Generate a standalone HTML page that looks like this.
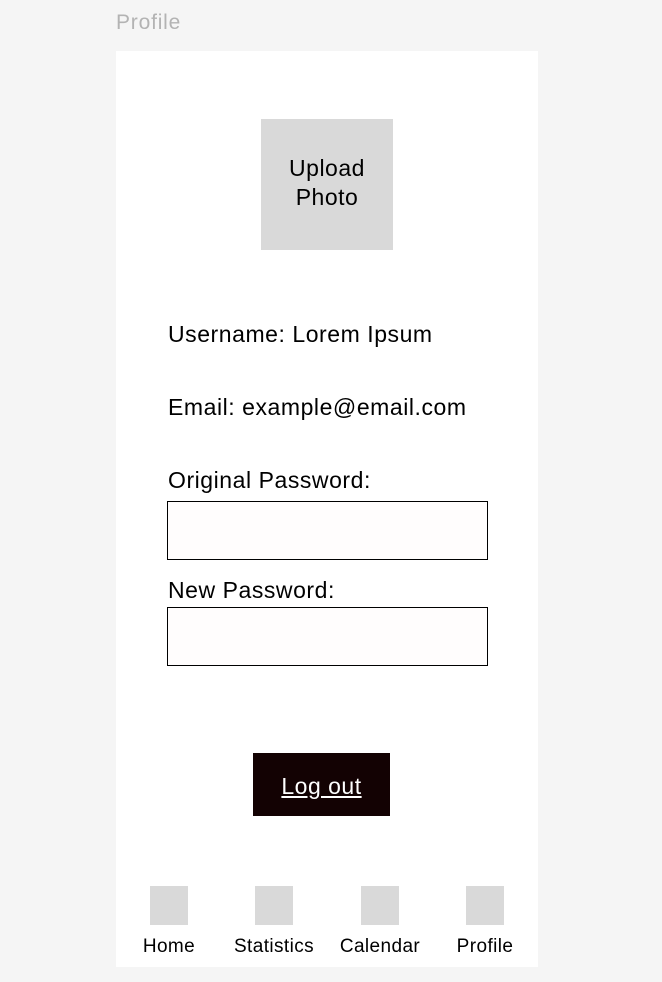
<!DOCTYPE html>
<html><head><meta charset="utf-8"><style>
*{margin:0;padding:0;box-sizing:border-box}
body{width:662px;height:982px;background:#f5f5f5;position:relative;font-family:"Liberation Sans",sans-serif;color:#000;overflow:hidden}
.a{position:absolute;white-space:nowrap}
.t{font-size:23px;letter-spacing:0.55px}
.l{font-size:19px;text-align:center;top:936px;width:110px;letter-spacing:0.4px}
</style></head><body>
<div class="a" style="left:116px;top:11px;font-size:21px;color:#b3b3b3;letter-spacing:0.8px">Profile</div>
<div class="a" style="left:116px;top:51px;width:422px;height:916px;background:#fff"></div>
<div class="a" style="left:261px;top:119px;width:132px;height:131px;background:#d9d9d9;font-size:23px;text-align:center;line-height:29px;padding-top:35px;white-space:normal;letter-spacing:0.5px">Upload<br>Photo</div>
<div class="a t" style="left:168px;top:321px">Username: Lorem Ipsum</div>
<div class="a t" style="left:168px;top:394px">Email: example@email.com</div>
<div class="a t" style="left:168px;top:467px">Original Password:</div>
<div class="a" style="left:167px;top:501px;width:321px;height:59px;border:1px solid #000;background:#fffdfd"></div>
<div class="a t" style="left:168px;top:577px">New Password:</div>
<div class="a" style="left:167px;top:607px;width:321px;height:59px;border:1px solid #000;background:#fffdfd"></div>
<div class="a" style="left:253px;top:753px;width:137px;height:63px;background:#130203;color:#fff;font-size:23px;text-align:center;line-height:66px;text-decoration:underline;letter-spacing:0.5px">Log out</div>
<div class="a" style="left:150px;top:886px;width:38px;height:39px;background:#d9d9d9"></div>
<div class="a" style="left:255px;top:886px;width:38px;height:39px;background:#d9d9d9"></div>
<div class="a" style="left:361px;top:886px;width:38px;height:39px;background:#d9d9d9"></div>
<div class="a" style="left:466px;top:886px;width:38px;height:39px;background:#d9d9d9"></div>
<div class="a l" style="left:114px">Home</div>
<div class="a l" style="left:219px">Statistics</div>
<div class="a l" style="left:325px">Calendar</div>
<div class="a l" style="left:430px">Profile</div>
</body></html>
